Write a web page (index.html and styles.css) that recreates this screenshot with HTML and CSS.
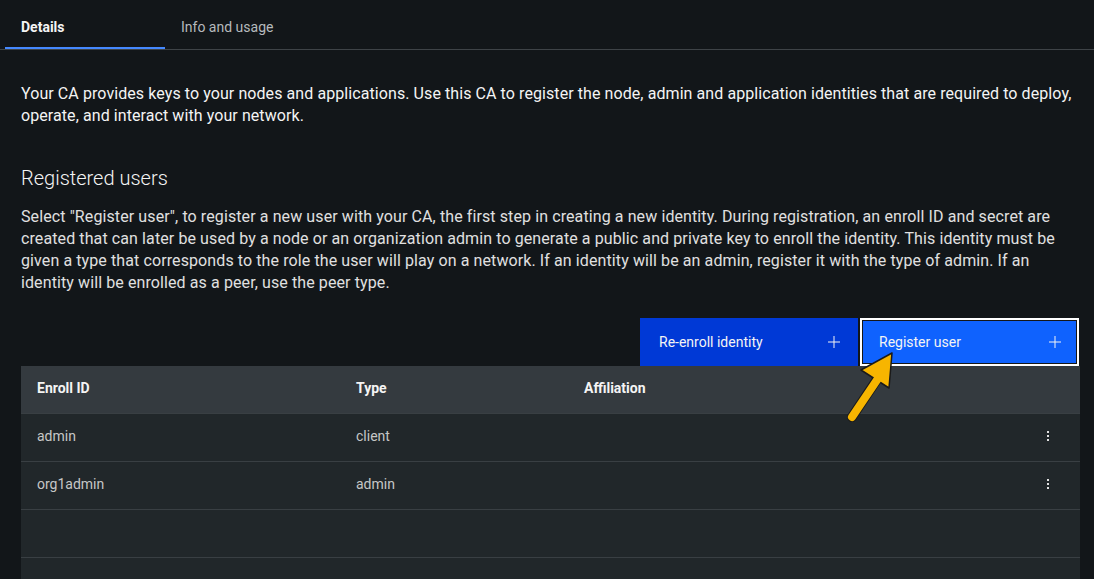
FILE: index.html
```html
<!DOCTYPE html>
<html>
<head>
<meta charset="utf-8">
<link rel="stylesheet" href="styles.css">
</head>
<body>
<div class="tabs">
  <div class="tab active">Details</div>
  <div class="tab">Info and usage</div>
</div>
<main class="content">
  <p class="intro">Your CA provides keys to your nodes and applications. Use this CA to register the node, admin and application identities that are required to deploy, operate, and interact with your network.</p>
  <h2 class="heading">Registered users</h2>
  <p class="desc">Select "Register user", to register a new user with your CA, the first step in creating a new identity. During registration, an enroll ID and secret are created that can later be used by a node or an organization admin to generate a public and private key to enroll the identity. This identity must be given a type that corresponds to the role the user will play on a network. If an identity will be an admin, register it with the type of admin. If an identity will be enrolled as a peer, use the peer type.</p>
  <div class="toolbar">
    <button class="btn btn-secondary">Re-enroll identity <svg class="plus" viewBox="0 0 16 16" width="16" height="16"><path d="M8.5 2v5.5H14v1H8.5V14h-1V8.5H2v-1h5.5V2z" fill="currentColor"/></svg></button>
    <button class="btn btn-primary">Register user <svg class="plus" viewBox="0 0 16 16" width="16" height="16"><path d="M8.5 2v5.5H14v1H8.5V14h-1V8.5H2v-1h5.5V2z" fill="currentColor"/></svg></button>
  </div>
  <div class="table">
    <div class="row head">
      <div class="cell c1">Enroll ID</div>
      <div class="cell c2">Type</div>
      <div class="cell c3">Affiliation</div>
      <div class="cell c4"></div>
    </div>
    <div class="row">
      <div class="cell c1">admin</div>
      <div class="cell c2">client</div>
      <div class="cell c3"></div>
      <div class="cell c4"><svg class="menu" viewBox="0 0 4 12" width="4" height="12"><rect x="1" y="1" width="2" height="2"/><rect x="1" y="5" width="2" height="2"/><rect x="1" y="9" width="2" height="2"/></svg></div>
    </div>
    <div class="row">
      <div class="cell c1">org1admin</div>
      <div class="cell c2">admin</div>
      <div class="cell c3"></div>
      <div class="cell c4"><svg class="menu" viewBox="0 0 4 12" width="4" height="12"><rect x="1" y="1" width="2" height="2"/><rect x="1" y="5" width="2" height="2"/><rect x="1" y="9" width="2" height="2"/></svg></div>
    </div>
    <div class="row"><div class="cell c1"></div></div>
    <div class="row"><div class="cell c1"></div></div>
  </div>
</main>
<svg class="arrow" width="70" height="90" viewBox="830 340 70 90">
  <path d="M852 417 L878 378" stroke="#1a1a1a" stroke-width="10" stroke-linecap="round" fill="none"/>
  <path d="M892 353 L861 370 L889 388 Z" fill="#f7b500" stroke="#1a1a1a" stroke-width="1.5" stroke-linejoin="round"/>
  <path d="M852 417 L879 377" stroke="#f7b500" stroke-width="8" stroke-linecap="round" fill="none"/>
</svg>
</body>
</html>
```
FILE: styles.css
```css
* { box-sizing: border-box; }
body {
  margin: 0;
  background: #121619;
  color: #f4f4f4;
  font-family: "Roboto", "Noto Sans", sans-serif;
  width: 1094px;
  height: 579px;
  overflow: hidden;
  position: relative;
}
.tabs {
  display: flex;
  height: 50px;
  padding-left: 5px;
  box-shadow: inset 0 -1px 0 #3e4347;
}
.tab {
  width: 160px;
  padding: 19px 15px 0 16px;
  font-size: 14px;
  color: #b6babd;
  border-bottom: 3px solid transparent;
  height: 50px;
}
.tab.active {
  color: #f4f4f4;
  font-weight: 700;
  border-bottom-color: #4589ff;
  border-bottom-width: 2px;
  height: 49px;
}
.content {
  padding: 0 14px 0 21px;
}
.intro {
  margin: 33px 0 0;
  font-size: 16px;
  line-height: 22px;
  letter-spacing: 0.08px;
  color: #f4f4f4;
}
.heading {
  margin: 37px 0 0;
  font-size: 20px;
  line-height: 28px;
  font-weight: 300;
  color: #f4f4f4;
}
.desc {
  margin: 14px 0 0;
  font-size: 16px;
  line-height: 22px;
  letter-spacing: 0.1px;
  color: #e0e0e0;
}
.toolbar {
  margin-top: 24px;
  display: flex;
  justify-content: flex-end;
  gap: 2px;
  padding-right: 1px;
}
.btn {
  height: 48px;
  border: 0;
  font-family: inherit;
  font-size: 14px;
  color: #f4f4f4;
  display: flex;
  align-items: center;
  justify-content: space-between;
  padding: 0 16px 0 19px;
  cursor: pointer;
}
.btn-secondary {
  width: 218px;
  background: #0039d6;
}
.btn-primary {
  width: 219px;
  background: #0f62fe;
  border: 2px solid #ffffff;
  box-shadow: inset 0 0 0 1px #161616;
  padding: 0 14px 0 17px;
}
.plus { display: block; }
.table {
  width: 1059px;
}
.row {
  display: flex;
  height: 48px;
  background: #21272a;
  border-top: 1px solid #393f43;
  font-size: 14px;
  color: #c6c6c6;
  padding-bottom: 3px;
}
.row.head {
  height: 47px;
  background: #343a3f;
  border-top: 0;
  font-weight: 700;
  color: #f4f4f4;
}
.cell {
  display: flex;
  align-items: center;
  padding-left: 16px;
}
.c1 { width: 319px; }
.c2 { width: 228px; }
.c3 { width: 430px; }
.c4 { flex: 1; padding-left: 48px; }
.menu { fill: #e0e0e0; display: block; }
.arrow {
  position: absolute;
  left: 830px;
  top: 340px;
}
```
